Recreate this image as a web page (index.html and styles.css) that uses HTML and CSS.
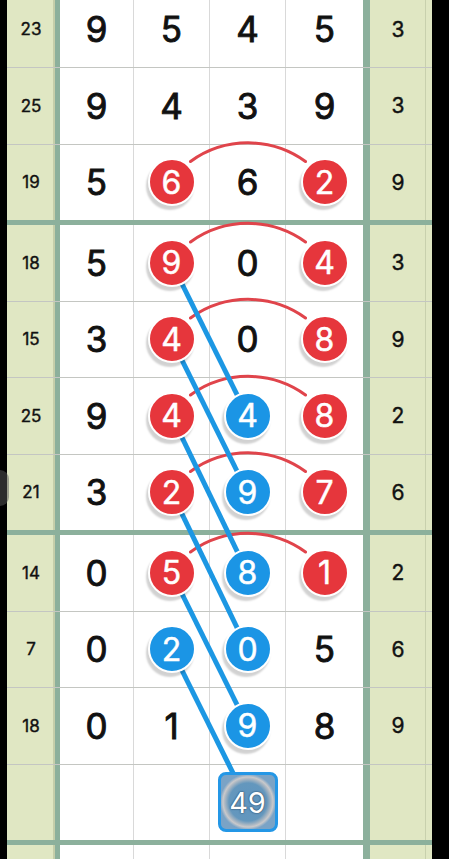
FILE: index.html
```html
<!DOCTYPE html>
<html>
<head>
<meta charset="utf-8">
<link rel="stylesheet" href="styles.css">
</head>
<body>
<div class="screen">
  <div class="board">
    <svg class="lines" width="425" height="1000" viewBox="7 -85 425 1000">
      <g class="arcs" fill="none" stroke="#e0444b" stroke-width="3" stroke-linecap="round">
        <path d="M190.5 161.5 A98 98 0 0 1 305.5 161.5"/>
        <path d="M190.5 242 A98 98 0 0 1 305.5 242"/>
        <path d="M190.5 318 A98 98 0 0 1 305.5 318"/>
        <path d="M190.5 395 A98 98 0 0 1 305.5 395"/>
        <path d="M190.5 471.5 A98 98 0 0 1 305.5 471.5"/>
        <path d="M190.5 552 A98 98 0 0 1 305.5 552"/>
      </g>
      <g class="links" stroke="#1c97e3" stroke-width="5">
        <line x1="171.5" y1="262.75" x2="247.5" y2="415.75"/>
        <line x1="171.5" y1="339" x2="247.5" y2="492.25"/>
        <line x1="171.5" y1="415.75" x2="247.5" y2="572.75"/>
        <line x1="171.5" y1="492.25" x2="247.5" y2="649.25"/>
        <line x1="171.5" y1="572.75" x2="247.5" y2="725.75"/>
        <line x1="171.5" y1="649.25" x2="247.5" y2="802.25"/>
      </g>
    </svg>

    <div class="group">
      <div class="row">
        <div class="side left"></div>
        <div class="cell"></div><div class="cell"></div><div class="cell"></div><div class="cell"></div>
        <div class="side right"></div>
      </div>
      <div class="row">
        <div class="side left">23</div>
        <div class="cell">9</div><div class="cell">5</div><div class="cell">4</div><div class="cell">5</div>
        <div class="side right">3</div>
      </div>
      <div class="row">
        <div class="side left">25</div>
        <div class="cell">9</div><div class="cell">4</div><div class="cell">3</div><div class="cell">9</div>
        <div class="side right">3</div>
      </div>
      <div class="row">
        <div class="side left">19</div>
        <div class="cell">5</div><div class="cell"><span class="ball red">6</span></div><div class="cell">6</div><div class="cell"><span class="ball red">2</span></div>
        <div class="side right">9</div>
      </div>
    </div>

    <div class="group">
      <div class="row">
        <div class="side left">18</div>
        <div class="cell">5</div><div class="cell"><span class="ball red">9</span></div><div class="cell">0</div><div class="cell"><span class="ball red">4</span></div>
        <div class="side right">3</div>
      </div>
      <div class="row">
        <div class="side left">15</div>
        <div class="cell">3</div><div class="cell"><span class="ball red">4</span></div><div class="cell">0</div><div class="cell"><span class="ball red">8</span></div>
        <div class="side right">9</div>
      </div>
      <div class="row">
        <div class="side left">25</div>
        <div class="cell">9</div><div class="cell"><span class="ball red">4</span></div><div class="cell"><span class="ball blue">4</span></div><div class="cell"><span class="ball red">8</span></div>
        <div class="side right">2</div>
      </div>
      <div class="row">
        <div class="side left">21</div>
        <div class="cell">3</div><div class="cell"><span class="ball red">2</span></div><div class="cell"><span class="ball blue">9</span></div><div class="cell"><span class="ball red">7</span></div>
        <div class="side right">6</div>
      </div>
    </div>

    <div class="group">
      <div class="row">
        <div class="side left">14</div>
        <div class="cell">0</div><div class="cell"><span class="ball red">5</span></div><div class="cell"><span class="ball blue">8</span></div><div class="cell"><span class="ball red">1</span></div>
        <div class="side right">2</div>
      </div>
      <div class="row">
        <div class="side left">7</div>
        <div class="cell">0</div><div class="cell"><span class="ball blue">2</span></div><div class="cell"><span class="ball blue">0</span></div><div class="cell">5</div>
        <div class="side right">6</div>
      </div>
      <div class="row">
        <div class="side left">18</div>
        <div class="cell">0</div><div class="cell">1</div><div class="cell"><span class="ball blue">9</span></div><div class="cell">8</div>
        <div class="side right">9</div>
      </div>
      <div class="row">
        <div class="side left"></div>
        <div class="cell"></div><div class="cell"></div><div class="cell"><span class="pick">49</span></div><div class="cell"></div>
        <div class="side right"></div>
      </div>
    </div>

    <div class="group">
      <div class="row">
        <div class="side left"></div>
        <div class="cell"></div><div class="cell"></div><div class="cell"></div><div class="cell"></div>
        <div class="side right"></div>
      </div>
    </div>
  </div>
  <div class="edge"></div>
</div>
</body>
</html>
```

FILE: styles.css
```css
html, body {
  margin: 0;
  padding: 0;
  background: #000;
  overflow: hidden;
}

.screen {
  position: relative;
  width: 449px;
  height: 859px;
  overflow: hidden;
  font-family: "Inter", "Lato", sans-serif;
}

.board {
  position: relative;
  width: 425px;
  margin: -85px 0 0 7px;
}

.lines {
  position: absolute;
  left: 0;
  top: 0;
  z-index: 1;
}

.row {
  display: grid;
  grid-template-columns: 53px 74px 76px 76px 77px 69px;
  height: 75.5px;
  border-bottom: 1px solid #c4c6c2;
}

.row:last-child {
  border-bottom: 5px solid #8cb09c;
}

.side {
  display: flex;
  align-items: center;
  justify-content: center;
  background: #e0e7c3;
  color: #111;
  -webkit-text-stroke: 0.4px #111;
}

.side.left {
  border-right: 5px solid #8cb09c;
  box-shadow: inset -2px 0 0 #c5ceaa;
  font-size: 17px;
}

.side.right {
  border-left: 7px solid #8cb09c;
  padding-right: 6px;
  box-shadow: inset -6px 0 0 #e0e7c3, inset -7px 0 0 #c8d0ad;
  font-size: 21px;
}

.cell {
  display: flex;
  align-items: center;
  justify-content: center;
  background: #fff;
  border-right: 1px solid #d9d9d9;
  font-size: 35px;
  color: #111;
  -webkit-text-stroke: 0.9px #111;
}

.cell:nth-child(5) {
  border-right: none;
}

.ball {
  position: relative;
  z-index: 2;
  box-sizing: border-box;
  width: 48px;
  height: 48px;
  border-radius: 50%;
  border: 2px solid #fff;
  display: flex;
  align-items: center;
  justify-content: center;
  color: #fff;
  font-size: 32px;
  -webkit-text-stroke: 0.5px #fff;
  box-shadow: -2px 4px 2px rgba(0, 0, 0, 0.18);
}

.ball.red {
  background: #e6363c;
}

.ball.blue {
  background: #1b95e5;
}

.pick {
  position: relative;
  z-index: 2;
  box-sizing: border-box;
  width: 60px;
  height: 60px;
  border: 3px solid #2497e6;
  border-radius: 8px;
  background: radial-gradient(circle, #5f95c0 0, #6497bd 19px, #a9b6c2 23px, #c9c9cb 25px, #7aa3c6 28px);
  display: flex;
  align-items: center;
  justify-content: center;
  color: #fff;
  font-size: 29px;
  -webkit-text-stroke: 0;
  text-shadow: 0 0 2px #2a4a66, 0 0 1px #2a4a66;
}

.edge {
  position: absolute;
  left: 0;
  top: 470px;
  width: 9px;
  height: 36px;
  border-radius: 0 18px 18px 0;
  background: rgba(90, 90, 90, 0.5);
  z-index: 3;
}
```
